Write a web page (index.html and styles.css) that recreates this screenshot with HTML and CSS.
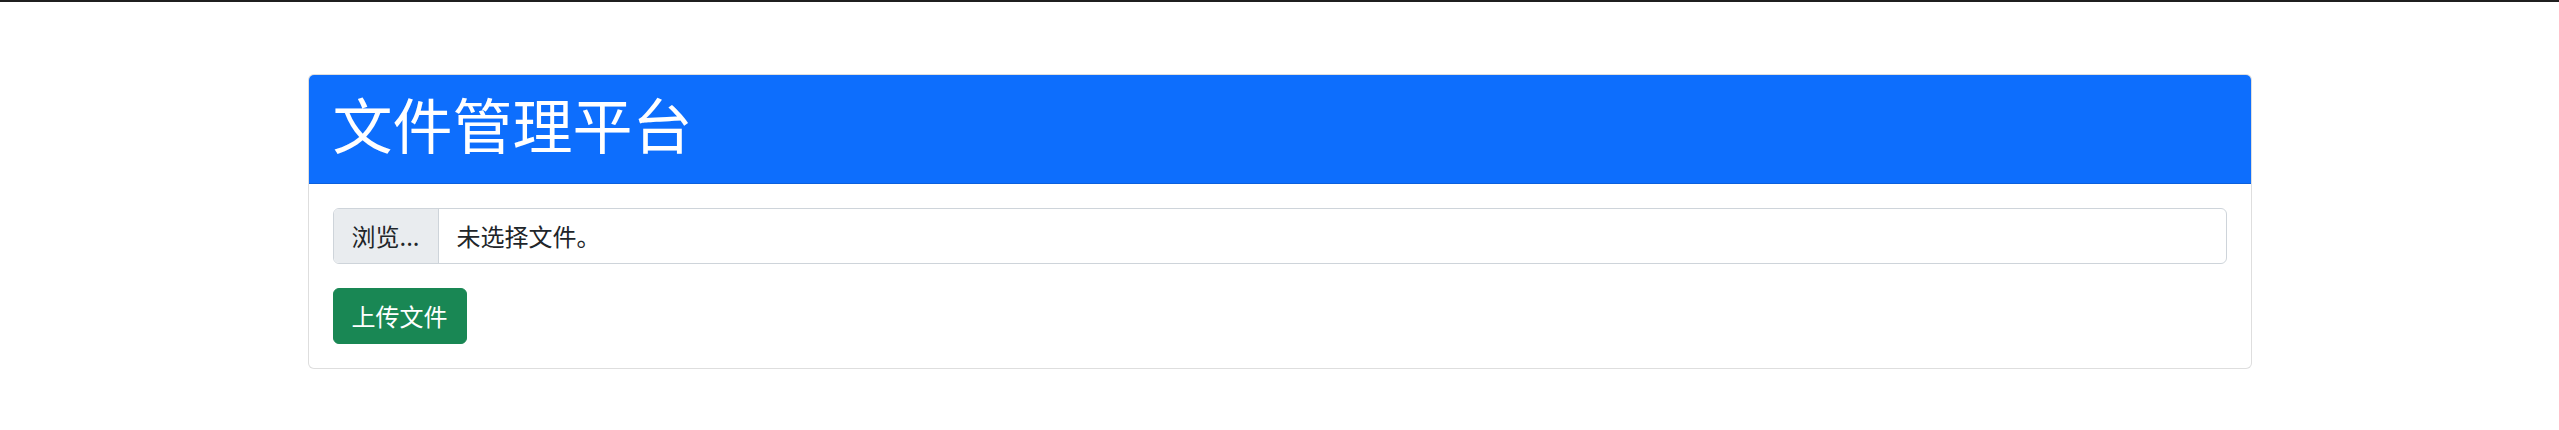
FILE: index.html
```html
<!DOCTYPE html>
<html lang="zh-CN">
<head>
<meta charset="utf-8">
<title>文件管理平台</title>
<link rel="stylesheet" href="styles.css">
</head>
<body>
<div class="topbar"></div>
<div class="container">
  <div class="card">
    <div class="card-header">
      <h1 class="title">文件管理平台</h1>
    </div>
    <div class="card-body">
      <div class="file-input">
        <span class="file-btn">浏览...</span>
        <span class="file-name">未选择文件。</span>
      </div>
      <button class="btn-success" type="button">上传文件</button>
    </div>
  </div>
</div>
</body>
</html>
```

FILE: styles.css
```css
* {
  box-sizing: border-box;
}

html, body {
  margin: 0;
  padding: 0;
  background: #ffffff;
}

body {
  font-family: "Noto Sans CJK SC", "Noto Sans", sans-serif;
  font-size: 24px;
  line-height: 1.5;
  color: #212529;
}

.topbar {
  height: 2px;
  background: #1f1f1f;
}

.container {
  width: 1980px;
  margin: 72px auto 0;
  padding: 0 18px;
}

.card {
  border: 1px solid rgba(0, 0, 0, 0.13);
  border-radius: 6px;
  background: #fff;
  overflow: hidden;
}

.card-header {
  background: #0d6efd;
  color: #fff;
  padding: 12px 24px;
  border-bottom: 1px solid rgba(0, 0, 0, 0.125);
}

.title {
  margin: 0 0 12px;
  font-size: 60px;
  font-weight: 400;
  line-height: 72px;
}

.card-body {
  padding: 24px;
  display: flex;
  flex-direction: column;
  align-items: flex-start;
  gap: 24px;
}

.file-input {
  align-self: stretch;
  display: flex;
  height: 56px;
  border: 1px solid #ced4da;
  border-radius: 6px;
  overflow: hidden;
  line-height: 36px;
}

.file-btn {
  background: #e9ecef;
  border-right: 1px solid #ced4da;
  padding: 9px 18px;
  color: #212529;
}

.file-name {
  padding: 9px 18px;
  color: #212529;
}

.btn-success {
  font-family: inherit;
  font-size: 24px;
  line-height: 36px;
  height: 56px;
  padding: 9px 18px;
  color: #fff;
  background: #198754;
  border: 1px solid #198754;
  border-radius: 6px;
  cursor: pointer;
}
```
